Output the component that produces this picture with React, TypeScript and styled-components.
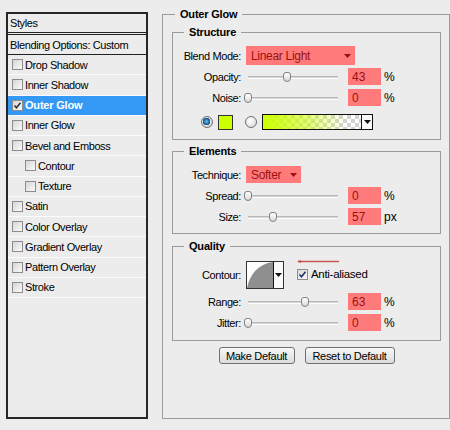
import React from 'react';
import styled, { createGlobalStyle, css } from 'styled-components';

const GlobalStyle = createGlobalStyle`
  html, body { margin: 0; padding: 0; background: #ececec; }
  body {
    font-family: "Liberation Sans", Arial, sans-serif;
    font-size: 11px;
    color: #000;
  }
`;

const Dialog = styled.div`
  display: flex;
  align-items: flex-start;
  width: 450px;
  height: 430px;
  overflow: hidden;
`;

/* ---------- left: styles list ---------- */

const StylesPanel = styled.div`
  box-sizing: border-box;
  width: 142px;
  height: 407px;
  margin: 12px 0 0 6px;
  border: 2px solid #262626;
  display: flex;
  flex-direction: column;
`;

const PanelHeader = styled.div`
  height: 18px;
  display: flex;
  align-items: center;
  padding-left: 2px;
  border-bottom: 3px double #222;
  letter-spacing: -0.4px;
`;

const BlendingRow = styled.div`
  height: 20px;
  box-sizing: border-box;
  display: flex;
  align-items: center;
  padding-left: 2px;
  border-bottom: 1px solid #222;
  letter-spacing: -0.4px;
`;

const StyleRow = styled.div<{ $indent?: boolean; $active?: boolean }>`
  height: 20.25px;
  box-sizing: border-box;
  display: flex;
  align-items: center;
  gap: 2px;
  padding-left: ${(p) => (p.$indent ? 17 : 4)}px;
  border-bottom: 1px solid #fbfbfb;
  letter-spacing: -0.4px;
  ${(p) =>
    p.$active &&
    css`
      background: #3399f5;
      color: #fff;
      font-weight: bold;
      letter-spacing: -0.2px;
    `}
`;

const CheckBox = styled.span`
  box-sizing: border-box;
  width: 11px;
  height: 11px;
  flex: none;
  display: inline-flex;
  align-items: center;
  justify-content: center;
  border: 1px solid #8c8c8c;
  background: linear-gradient(135deg, #d6d6d6, #fafafa);
`;

const Tick = ({ color = '#1f2f6b' }: { color?: string }) => (
  <svg width="9" height="9" viewBox="0 0 9 9">
    <path d="M1.5 4.5 L3.5 6.8 L7.5 1.8" fill="none" stroke={color} strokeWidth="1.6" />
  </svg>
);

/* ---------- right: outer glow ---------- */

const OuterGroup = styled.div`
  box-sizing: border-box;
  width: 288px;
  height: 405px;
  margin: 14px 0 0 14px;
  border: 1px solid #9a9a9a;
  padding: 0 8px 0 9px;
`;

const GroupTitle = styled.div<{ $offset: number }>`
  display: table;
  height: 14px;
  line-height: 14px;
  margin: -8px 0 0 ${(p) => p.$offset}px;
  padding: 0 5px;
  background: #ececec;
  font-weight: bold;
  letter-spacing: -0.2px;
`;

const Group = styled.div<{ $top: number; $bottom: number }>`
  border: 1px solid #9a9a9a;
  margin-top: ${(p) => p.$top}px;
  padding-bottom: ${(p) => p.$bottom}px;
`;

const Rows = styled.div`
  margin-top: 6px;
  display: flex;
  flex-direction: column;
`;

const Row = styled.div<{ $h: number }>`
  height: ${(p) => p.$h}px;
  display: flex;
  align-items: center;
`;

const Label = styled.div`
  width: 68px;
  margin-right: 5px;
  text-align: right;
  letter-spacing: -0.4px;
  flex: none;
`;

const Select = styled.div<{ $w: number; $h: number }>`
  box-sizing: border-box;
  width: ${(p) => p.$w}px;
  height: ${(p) => p.$h}px;
  display: flex;
  align-items: center;
  justify-content: space-between;
  padding: 0 4px 0 5px;
  background: #ff7b7b;
  color: #9b1010;
  font-size: 12px;
  letter-spacing: -0.3px;
`;

const Caret = ({ color }: { color: string }) => (
  <svg width="7" height="4" viewBox="0 0 7 4">
    <polygon points="0,0 7,0 3.5,4" fill={color} />
  </svg>
);

const SliderWrap = styled.div`
  position: relative;
  width: 94px;
  height: 12px;
  flex: none;

  &::before {
    content: '';
    position: absolute;
    left: 2px;
    right: 2px;
    top: 5px;
    height: 1px;
    border-top: 1px solid #b9b9b9;
    border-bottom: 1px solid #fdfdfd;
    background: #d6d6d6;
  }
`;

const Thumb = styled.div`
  position: absolute;
  top: 1px;
  box-sizing: border-box;
  width: 8px;
  height: 10px;
  margin-left: -4px;
  border: 1px solid #808080;
  border-radius: 3px 3px 4px 4px;
  background: linear-gradient(#ffffff, #d9d9d9);
`;

const ValueBox = styled.div`
  box-sizing: border-box;
  width: 33px;
  height: 17px;
  margin-left: 8px;
  padding-left: 4px;
  display: flex;
  align-items: center;
  background: #ff7b7b;
  color: #9b1010;
  font-size: 12px;
`;

const Unit = styled.span`
  margin-left: 3px;
  font-size: 12px;
`;

const ColorRow = styled(Row)`
  margin-top: 4px;
  padding-left: 28px;
`;

const Radio = styled.span<{ $on?: boolean }>`
  box-sizing: border-box;
  width: 12px;
  height: 12px;
  flex: none;
  border-radius: 50%;
  border: 1px solid #6f6f6f;
  background: radial-gradient(circle at 40% 35%, #ffffff, #d4d4d4);
  ${(p) =>
    p.$on &&
    css`
      background: radial-gradient(circle at 45% 45%, #6fc0f0 0, #1d6fae 2.5px, #2a4f78 3.5px, #e8e8e8 4px, #c8c8c8 6px);
    `}
`;

const Swatch = styled.div`
  box-sizing: border-box;
  width: 15px;
  height: 15px;
  margin: 0 12px 0 5px;
  border: 1px solid #333;
  background: #ccff00;
`;

const GradientPicker = styled.div`
  box-sizing: border-box;
  width: 111px;
  height: 16px;
  margin-left: 5px;
  display: flex;
  border: 1px solid #111;
`;

const GradientStrip = styled.div`
  flex: 1;
  background:
    linear-gradient(to right, #ccff00 0%, rgba(204, 255, 0, 0.55) 45%, rgba(204, 255, 0, 0) 85%),
    repeating-conic-gradient(#d2d2d2 0 25%, #ffffff 0 50%) 0 0 / 8px 8px;
`;

const ArrowCell = styled.div<{ $w: number }>`
  width: ${(p) => p.$w}px;
  flex: none;
  display: flex;
  align-items: center;
  justify-content: center;
  border-left: 1px solid #111;
  background: #fafafa;
`;

const ContourPicker = styled.div`
  box-sizing: border-box;
  width: 38px;
  height: 28px;
  display: flex;
  border: 1px solid #333;
  background: #fff;
`;

const CurveArea = styled.div`
  flex: 1;
  display: flex;
`;

const AntiAliasColumn = styled.div`
  align-self: flex-start;
  margin: 1px 0 0 13px;
  display: flex;
  flex-direction: column;
  gap: 4px;
`;

const CheckLabel = styled.label`
  display: flex;
  align-items: center;
  gap: 3px;
  letter-spacing: -0.3px;
  font-size: 11.5px;
`;

const ButtonBar = styled.div`
  margin-top: 6px;
  display: flex;
  justify-content: center;
  gap: 10px;
`;

const Button = styled.button<{ $w: number }>`
  box-sizing: border-box;
  width: ${(p) => p.$w}px;
  height: 17px;
  padding: 0;
  border: 1px solid #707070;
  border-radius: 3px;
  background: linear-gradient(#f7f7f7, #dcdcdc);
  font-family: "Liberation Sans", Arial, sans-serif;
  font-size: 11px;
  letter-spacing: -0.3px;
  color: #000;
`;

const styleItems = [
  { name: 'Drop Shadow' },
  { name: 'Inner Shadow' },
  { name: 'Outer Glow', checked: true },
  { name: 'Inner Glow' },
  { name: 'Bevel and Emboss' },
  { name: 'Contour', indent: true },
  { name: 'Texture', indent: true },
  { name: 'Satin' },
  { name: 'Color Overlay' },
  { name: 'Gradient Overlay' },
  { name: 'Pattern Overlay' },
  { name: 'Stroke' },
];

function SliderField({ label, value, pos, unit }: { label: string; value: string; pos: number; unit: string }) {
  return (
    <Row $h={21}>
      <Label>{label}</Label>
      <SliderWrap>
        <Thumb style={{ left: `${2 + pos * 90}px` }} />
      </SliderWrap>
      <ValueBox>{value}</ValueBox>
      <Unit>{unit}</Unit>
    </Row>
  );
}

export default function App() {
  return (
    <>
      <GlobalStyle />
      <Dialog>
        <StylesPanel>
          <PanelHeader>Styles</PanelHeader>
          <BlendingRow>Blending Options: Custom</BlendingRow>
          {styleItems.map((item) => (
            <StyleRow key={item.name} $indent={item.indent} $active={item.checked}>
              <CheckBox>{item.checked && <Tick color="#333" />}</CheckBox>
              {item.name}
            </StyleRow>
          ))}
        </StylesPanel>

        <OuterGroup>
          <GroupTitle $offset={3}>Outer Glow</GroupTitle>

          {/*------------ Structure -----------*/}
          <Group $top={11} $bottom={7}>
            <GroupTitle $offset={11}>Structure</GroupTitle>
            <Rows>
              <Row $h={21}>
                <Label>Blend Mode:</Label>
                <Select $w={109} $h={19}>
                  Linear Light
                  <Caret color="#9b1010" />
                </Select>
              </Row>
              <SliderField label="Opacity:" value="43" pos={0.43} unit="%" />
              <SliderField label="Noise:" value="0" pos={0} unit="%" />
              <ColorRow $h={20}>
                <Radio $on />
                <Swatch />
                <Radio />
                <GradientPicker>
                  <GradientStrip />
                  <ArrowCell $w={10}>
                    <Caret color="#111" />
                  </ArrowCell>
                </GradientPicker>
              </ColorRow>
            </Rows>
          </Group>

          {/*------------ Elements -----------*/}
          <Group $top={11} $bottom={6}>
            <GroupTitle $offset={11}>Elements</GroupTitle>
            <Rows>
              <Row $h={21}>
                <Label>Technique:</Label>
                <Select $w={55} $h={17}>
                  Softer
                  <Caret color="#9b1010" />
                </Select>
              </Row>
              <SliderField label="Spread:" value="0" pos={0} unit="%" />
              <SliderField label="Size:" value="57" pos={0.28} unit="px" />
            </Rows>
          </Group>

          {/*------------ Quality -----------*/}
          <Group $top={12} $bottom={7}>
            <GroupTitle $offset={11}>Quality</GroupTitle>
            <Rows>
              <Row $h={32}>
                <Label>Contour:</Label>
                <ContourPicker>
                  <CurveArea>
                    <svg width="26" height="26" viewBox="0 0 26 26">
                      <path d="M0 26 C 3 12, 11 2, 26 0 L26 26 Z" fill="#8f8f8f" />
                    </svg>
                  </CurveArea>
                  <ArrowCell $w={9}>
                    <Caret color="#111" />
                  </ArrowCell>
                </ContourPicker>
                <AntiAliasColumn>
                  <svg width="42" height="4" viewBox="0 0 42 4">
                    <line x1="1" y1="1.5" x2="42" y2="1.5" stroke="#c4574f" strokeWidth="1.5" />
                    <polygon points="0,1.5 4,0 4,3" fill="#c4574f" />
                  </svg>
                  <CheckLabel>
                    <CheckBox>
                      <Tick />
                    </CheckBox>
                    Anti-aliased
                  </CheckLabel>
                </AntiAliasColumn>
              </Row>
              <SliderField label="Range:" value="63" pos={0.63} unit="%" />
              <SliderField label="Jitter:" value="0" pos={0} unit="%" />
            </Rows>
          </Group>

          <ButtonBar>
            <Button $w={76}>Make Default</Button>
            <Button $w={90}>Reset to Default</Button>
          </ButtonBar>
        </OuterGroup>
      </Dialog>
    </>
  );
}
